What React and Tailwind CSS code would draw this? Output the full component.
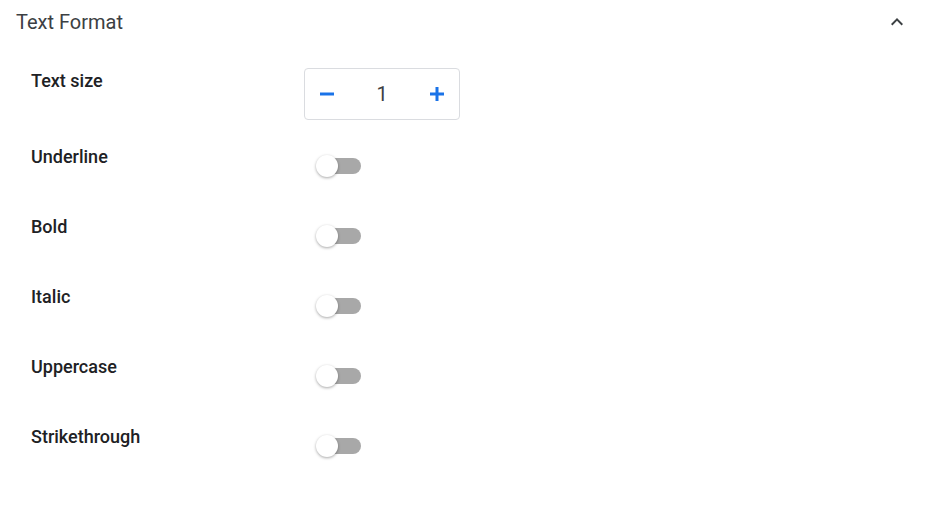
import React from "react";

function Toggle() {
  return (
    <div className="relative ml-[12px] h-[22px] w-[46px]">
      <div className="absolute left-[5px] top-[3px] h-[16px] w-[40px] rounded-full bg-[#a8a8a8]" />
      <div className="absolute left-0 top-0 h-[22px] w-[22px] rounded-full bg-white shadow-[0_1px_3px_rgba(0,0,0,0.35)]" />
    </div>
  );
}

function ToggleRow({ label }) {
  return (
    <div className="flex h-[70px]">
      <div className="w-[273px] text-[18px] font-medium leading-[26px] text-[#202124]">{label}</div>
      <div className="pt-[11px]">
        <Toggle />
      </div>
    </div>
  );
}

export default function App() {
  return (
    <div className="h-[517px] w-[936px] bg-white font-['Roboto',sans-serif]">
      <div className="flex h-[43px] items-center justify-between pl-4 pr-[27px]">
        <span className="text-[20px] leading-7 text-[#3c4043]">Text Format</span>
        <svg width="24" height="24" viewBox="0 0 24 24" fill="#3c4043">
          <path d="M12 8l-6 6 1.41 1.41L12 10.83l4.59 4.58L18 14z" />
        </svg>
      </div>
      <div className="pl-[31px] pt-[25px]">
        <div className="flex">
          <div className="w-[273px] text-[18px] font-medium leading-[26px] text-[#202124]">Text size</div>
          <div className="flex h-[52px] w-[156px] items-center justify-between rounded-[4px] border border-[#dadce0] px-[10px]">
            <svg width="24" height="24" viewBox="0 0 24 24">
              <path d="M5 12h14" stroke="#1a73e8" strokeWidth="3" />
            </svg>
            <span className="text-[20px] leading-7 text-[#3c4043]">1</span>
            <svg width="24" height="24" viewBox="0 0 24 24">
              <path d="M5 12h14M12 5v14" stroke="#1a73e8" strokeWidth="3" />
            </svg>
          </div>
        </div>
        <div className="mt-[24px]">
          <ToggleRow label="Underline" />
          <ToggleRow label="Bold" />
          <ToggleRow label="Italic" />
          <ToggleRow label="Uppercase" />
          <ToggleRow label="Strikethrough" />
        </div>
      </div>
    </div>
  );
}
